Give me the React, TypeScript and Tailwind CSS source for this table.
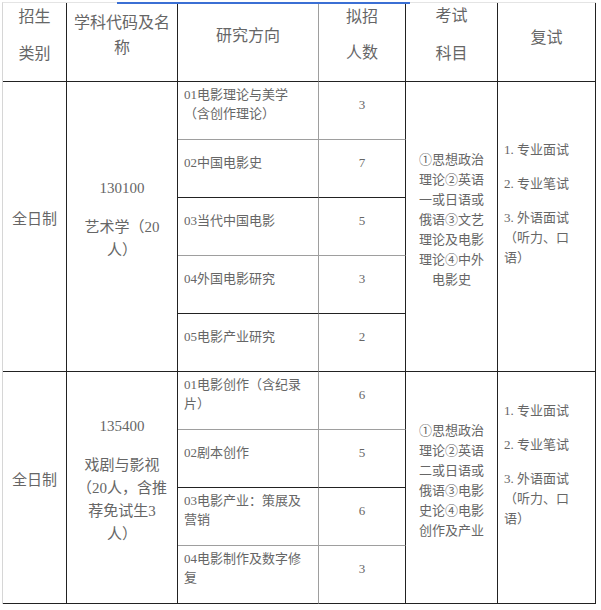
const sections = [
  {
    type: "全日制",
    code: "130100",
    name: ["艺术学（20", "人）"],
    directions: ["01电影理论与美学（含创作理论）", "02中国电影史", "03当代中国电影", "04外国电影研究", "05电影产业研究"],
    counts: [3, 7, 5, 3, 2],
    exam: "①思想政治理论②英语一或日语或俄语③文艺理论及电影理论④中外电影史",
  },
  {
    type: "全日制",
    code: "135400",
    name: ["戏剧与影视", "（20人，含推", "荐免试生3", "人）"],
    directions: ["01电影创作（含纪录片）", "02剧本创作", "03电影产业：策展及营销", "04电影制作及数字修复"],
    counts: [6, 5, 6, 3],
    exam: "①思想政治理论②英语二或日语或俄语③电影史论④电影创作及产业",
  },
];

const retest = ["1. 专业面试", "2. 专业笔试", "3. 外语面试（听力、口语）"];

export default function App() {
  return (
    <div className="relative min-h-[610px] bg-white pl-[2px] font-['Liberation_Serif','Noto_Sans_CJK_SC',serif] text-[#666]">
      {/* blue selection bar at the top */}
      <div className="absolute left-[117px] top-0 h-[2px] w-[293px] bg-[#3b6fd4]" />

      <div className="mt-[2px] grid w-[594px] grid-cols-[64px_111px_141px_87px_92px_98px] grid-rows-[79px_repeat(9,58px)] border-l border-t border-l-[#d6d6d6] border-t-[#e4e4e4]">
        {/* header */}
        <div className="flex flex-col items-center justify-center gap-[15px] border-b border-r border-b-[#222] border-r-[#222] pb-[14px] text-[16px] leading-[22px]">
          <p>招生</p>
          <p>类别</p>
        </div>
        <div className="flex items-center justify-center border-b border-r border-b-[#222] border-r-[#222] px-[4px] pb-[14px] text-center text-[16px] leading-[25px]">
          <p>学科代码及名称</p>
        </div>
        <div className="flex items-center justify-center border-b border-r border-b-[#222] border-r-[#9e9e9e] pb-[12px] text-[16px] leading-[22px]">
          <p>研究方向</p>
        </div>
        <div className="flex flex-col items-center justify-center gap-[14px] border-b border-r border-b-[#222] border-r-[#222] pb-[14px] text-[16px] leading-[22px]">
          <p>拟招</p>
          <p>人数</p>
        </div>
        <div className="flex flex-col items-center justify-center gap-[16px] border-b border-r border-b-[#222] border-r-[#222] pb-[14px] text-[16px] leading-[22px]">
          <p>考试</p>
          <p>科目</p>
        </div>
        <div className="flex items-center justify-center border-b border-r border-b-[#222] border-r-[#222] pb-[8px] text-[16px] leading-[22px]">
          <p>复试</p>
        </div>

        {sections.map((s, si) => {
          const span = s.directions.length === 5 ? "row-span-5" : "row-span-4";
          return s.directions.map((d, i) => {
            const last = i === s.directions.length - 1;
            const bottom = last || i % 2 === 1 ? "border-b-[#222]" : "border-b-[#9e9e9e]";
            return (
              <div key={`${si}-${i}`} className="contents">
                {i === 0 && (
                  <>
                    <div className={`${span} flex items-center justify-center border-b border-r border-b-[#222] border-r-[#222] pb-[15px] text-[15px] leading-[22px]`}>
                      {s.type}
                    </div>
                    <div className={`${span} flex flex-col items-center justify-center gap-[16px] border-b border-r border-b-[#222] border-r-[#222] px-[6px] pb-[14px] text-center text-[15px] leading-[23px]`}>
                      <p>{s.code}</p>
                      <p>
                        {s.name.map((line) => (
                          <span key={line} className="block whitespace-nowrap">
                            {line}
                          </span>
                        ))}
                      </p>
                    </div>
                  </>
                )}
                <div className={`flex items-center border-b border-r ${bottom} border-r-[#9e9e9e] pb-[13px] pl-[6px] pr-[7px] text-[13px] leading-[19px]`}>
                  <p>{d}</p>
                </div>
                <div className={`flex items-center justify-center border-b border-r ${bottom} border-r-[#222] pb-[13px] text-[13px] leading-[19px]`}>
                  {s.counts[i]}
                </div>
                {i === 0 && (
                  <>
                    <div className={`${span} flex items-center justify-center border-b border-r border-b-[#222] border-r-[#222] px-[10px] pb-[14px] text-center text-[13px] leading-[20px]`}>
                      <p>{s.exam}</p>
                    </div>
                    <div className={`${span} flex flex-col justify-center gap-[14px] border-b border-r border-b-[#222] border-r-[#222] pb-[46px] pl-[6px] pr-[19px] text-[13px] leading-[20px]`}>
                      {retest.map((r) => (
                        <p key={r}>{r}</p>
                      ))}
                    </div>
                  </>
                )}
              </div>
            );
          });
        })}
      </div>
    </div>
  );
}
